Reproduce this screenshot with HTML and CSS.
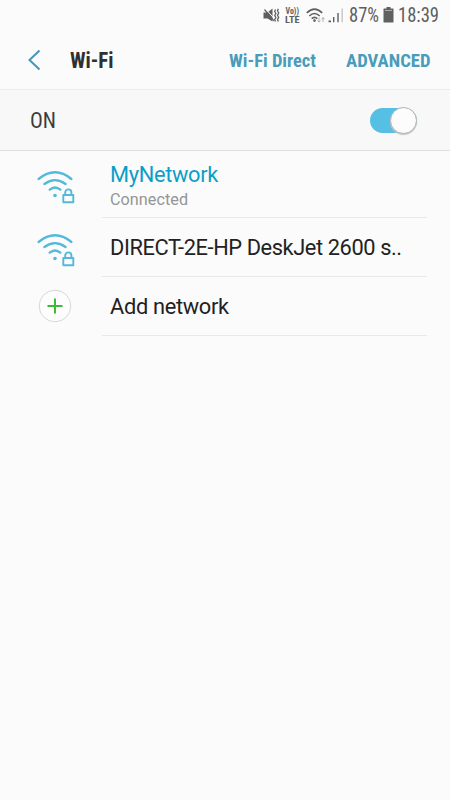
FILE: index.html
```html
<!DOCTYPE html>
<html lang="en">
<head>
<meta charset="utf-8">
<title>Wi-Fi</title>
<link rel="stylesheet" href="styles.css">
</head>
<body>
<div class="status">
  <svg class="mute" width="18" height="16" viewBox="0 0 18 16"><path class="fill" d="M.5 4.500h4L9.500 .500v13L4.500 10.500h-4z"/><path class="gap" d="M2.500 .8 12 11.500"/><path class="slash" d="M1.500 1.500 11 12.800"/><path class="thin" d="M12.500 1.500l-.8 2 1.200 2-1.200 2 1.200 2-1.200 2 .8 2M15.300 .8l-.8 2 1.200 2.200-1.200 2.200 1.200 2.200-1.200 2.200.8 2"/></svg>
  <svg class="volte" width="16" height="18" viewBox="0 0 16 18"><text x="0.500" y="7.500" textLength="13.500" lengthAdjust="spacingAndGlyphs">Vo))</text><text x="0" y="16.500" textLength="14.500" lengthAdjust="spacingAndGlyphs">LTE</text></svg>
  <svg class="wifi-small" width="20" height="17" viewBox="0 0 20 17"><path class="line" d="M.8 4.900Q8.500 -2.800 16.200 4.900M3.300 8Q8.500 3 13.700 8M5.700 10.600Q8.500 8 11.300 10.600"/><circle class="fill" cx="8.500" cy="12.600" r="1.300"/><path class="arrows" d="M13 9.500v4.500M11.500 12.500l1.500 1.700 1.500-1.700M17 14V9.500M15.500 11.200l1.500-1.700 1.500 1.700"/></svg>
  <svg class="signal" width="16" height="15" viewBox="0 0 16 15"><path class="fill" d="M.5 12.500h2.500v1.700H.5zM5 9h1.400v5.200H5zM9.300 5h1.400v9.200H9.300z"/><path class="faint" d="M13.500 .5h1.400v13.700h-1.400z"/></svg>
  <svg class="percent" width="32" height="20" viewBox="0 0 32 20"><text x="0" y="16" textLength="30" lengthAdjust="spacingAndGlyphs">87%</text></svg>
  <svg class="battery" width="12" height="16" viewBox="0 0 12 16"><path class="fill" d="M3.500 0h4v1.500H10q.5 0 .5.500v13q0 .5-.5.500H1q-.5 0-.5-.5V2q0-.5.5-.5h2.500z"/><path class="cap" d="M2 3.500h7"/></svg>
  <svg class="clock" width="44" height="20" viewBox="0 0 44 20"><text x="0" y="16" textLength="41" lengthAdjust="spacingAndGlyphs">18:39</text></svg>
</div>
<header class="bar">
  <svg class="back" width="14" height="22" viewBox="0 0 14 22"><path d="M11.500 1.500 1.500 11l10 9.500"/></svg>
  <svg class="title" width="46" height="26" viewBox="0 0 46 26"><text x="0" y="21" textLength="43.500" lengthAdjust="spacingAndGlyphs">Wi-Fi</text></svg>
  <svg class="action direct" width="90" height="26" viewBox="0 0 90 26"><text x="0" y="20" textLength="87" lengthAdjust="spacingAndGlyphs">Wi-Fi Direct</text></svg>
  <svg class="action advanced" width="88" height="26" viewBox="0 0 88 26"><text x="0" y="20" textLength="84.500" lengthAdjust="spacingAndGlyphs">ADVANCED</text></svg>
</header>
<section class="power">
  <svg class="state" width="30" height="26" viewBox="0 0 30 26"><text x="0" y="21" textLength="26" lengthAdjust="spacingAndGlyphs">ON</text></svg>
  <div class="switch"><div class="knob"></div></div>
</section>
<main>
  <div class="row first">
    <svg class="icon" width="40" height="36" viewBox="0 0 40 36"><path d="M2.600 9Q19 -4.400 35.400 9M8.400 14Q19 6.200 29.600 14M13.700 19.700Q19 15.300 24.300 19.700"/><circle cx="19" cy="25.500" r="1.800"/><path class="lock" d="M27.300 25h10v7.200h-10zM29.200 25v-2.500a3.100 3.100 0 0 1 6.200 0V25"/></svg>
    <div class="cell"><div class="name active">MyNetwork</div><div class="sub">Connected</div></div>
  </div>
  <div class="row">
    <svg class="icon" width="40" height="36" viewBox="0 0 40 36"><path d="M2.600 9Q19 -4.400 35.400 9M8.400 14Q19 6.200 29.600 14M13.700 19.700Q19 15.300 24.300 19.700"/><circle cx="19" cy="25.500" r="1.800"/><path class="lock" d="M27.300 25h10v7.200h-10zM29.200 25v-2.500a3.100 3.100 0 0 1 6.200 0V25"/></svg>
    <div class="cell"><div class="name ssid">DIRECT-2E-HP DeskJet 2600 s..</div></div>
  </div>
  <div class="row">
    <svg class="add" width="34" height="34" viewBox="0 0 34 34"><circle cx="17" cy="17" r="15.800"/><path d="M9.500 17h15M17 9.500v15"/></svg>
    <div class="cell"><div class="name">Add network</div></div>
  </div>
</main>
</body>
</html>
```
FILE: styles.css
```css
* { box-sizing: border-box; }
body { margin: 0; width: 450px; height: 800px; overflow: hidden; background: #fbfbfb; font-family: Roboto, sans-serif; color: #222; }
svg { display: block; flex: none; overflow: visible; }
svg text { font-family: "Roboto Condensed", Roboto, sans-serif; font-stretch: 75%; }
.status { display: flex; height: 31px; padding: 6px 0 0 263px; color: #606060; }
.status text { fill: #5e5e5e; font-size: 19.500px; }
.fill { fill: #606060; }
.line { fill: none; stroke: #606060; stroke-width: 1.600; }
.thin { fill: none; stroke: #606060; stroke-width: 1.300; }
.gap { stroke: #fbfbfb; stroke-width: 1; }
.slash { stroke: #606060; stroke-width: 1.300; }
.faint { fill: #c6c6c6; }
.arrows { fill: none; stroke: #b0b0b0; stroke-width: 1; }
.mute { margin-top: 2px; }
.volte { margin-left: 4px; }
.status .volte text { font-size: 8.500px; font-weight: 700; }
.wifi-small { margin: 2px 0 0 5px; }
.signal { margin: 2px 0 0 2px; }
.percent { margin-left: 5px; }
.battery { margin: 1px 0 0 2px; }
.cap { stroke: #aaa; stroke-width: 1; }
.clock { margin-left: 3px; }
.bar { display: flex; height: 59px; padding-top: 16px; border-bottom: 1px solid #ebebeb; }
.back { margin: 2px 0 0 28px; }
.back path { fill: none; stroke: #4198b8; stroke-width: 2; }
.title { margin-left: 28px; }
.title text { font-size: 22px; font-weight: 700; fill: #303030; }
.action text { font-size: 19.200px; font-weight: 700; fill: #4a9cba; }
.direct { margin-left: 112.500px; }
.advanced { margin-left: 27px; }
.power { display: flex; justify-content: space-between; height: 61px; padding: 17px 33px 0 29.500px; background: #f8f8f8; border-bottom: 1px solid #dfdfdf; }
.state text { font-size: 22px; fill: #3c3c3c; }
.switch { display: flex; justify-content: flex-end; align-items: center; width: 47px; height: 25px; margin-top: 1px; border-radius: 13px; background: #55c0e3; }
.knob { flex: none; width: 27px; height: 27px; margin-top: -1px; border: 1px solid #b2b2b2; border-radius: 50%; background: #fcfcfc; box-shadow: 0 1px 1px #c6c6c6; }
.row { display: flex; height: 59px; }
.first { height: 67px; }
.icon { margin: 14.500px 0 0 36px; }
.first .icon { margin-top: 19px; }
.icon path { fill: none; stroke: #52b9da; stroke-width: 2.300; stroke-linecap: round; }
.icon .lock { stroke-width: 1.900; stroke-linejoin: round; }
.icon circle { fill: #52b9da; }
.cell { width: 325px; margin-left: 26px; padding: 17px 0 0 8px; border-bottom: 1px solid #e9e9e9; }
.first .cell { padding-top: 11px; }
.name { font-size: 21.800px; line-height: 26px; letter-spacing: -0.310px; white-space: nowrap; }
.ssid { letter-spacing: -0.400px; }
.active { color: #0b9ec9; }
.sub { margin-top: 1px; font-size: 16.200px; line-height: 22px; letter-spacing: 0.050px; color: #959595; }
.add { margin: 12px 4px 0 38px; }
.add circle { fill: #fdfdfd; stroke: #d8d8d8; stroke-width: 1; }
.add path { stroke: #3dbb32; stroke-width: 2; }
```
